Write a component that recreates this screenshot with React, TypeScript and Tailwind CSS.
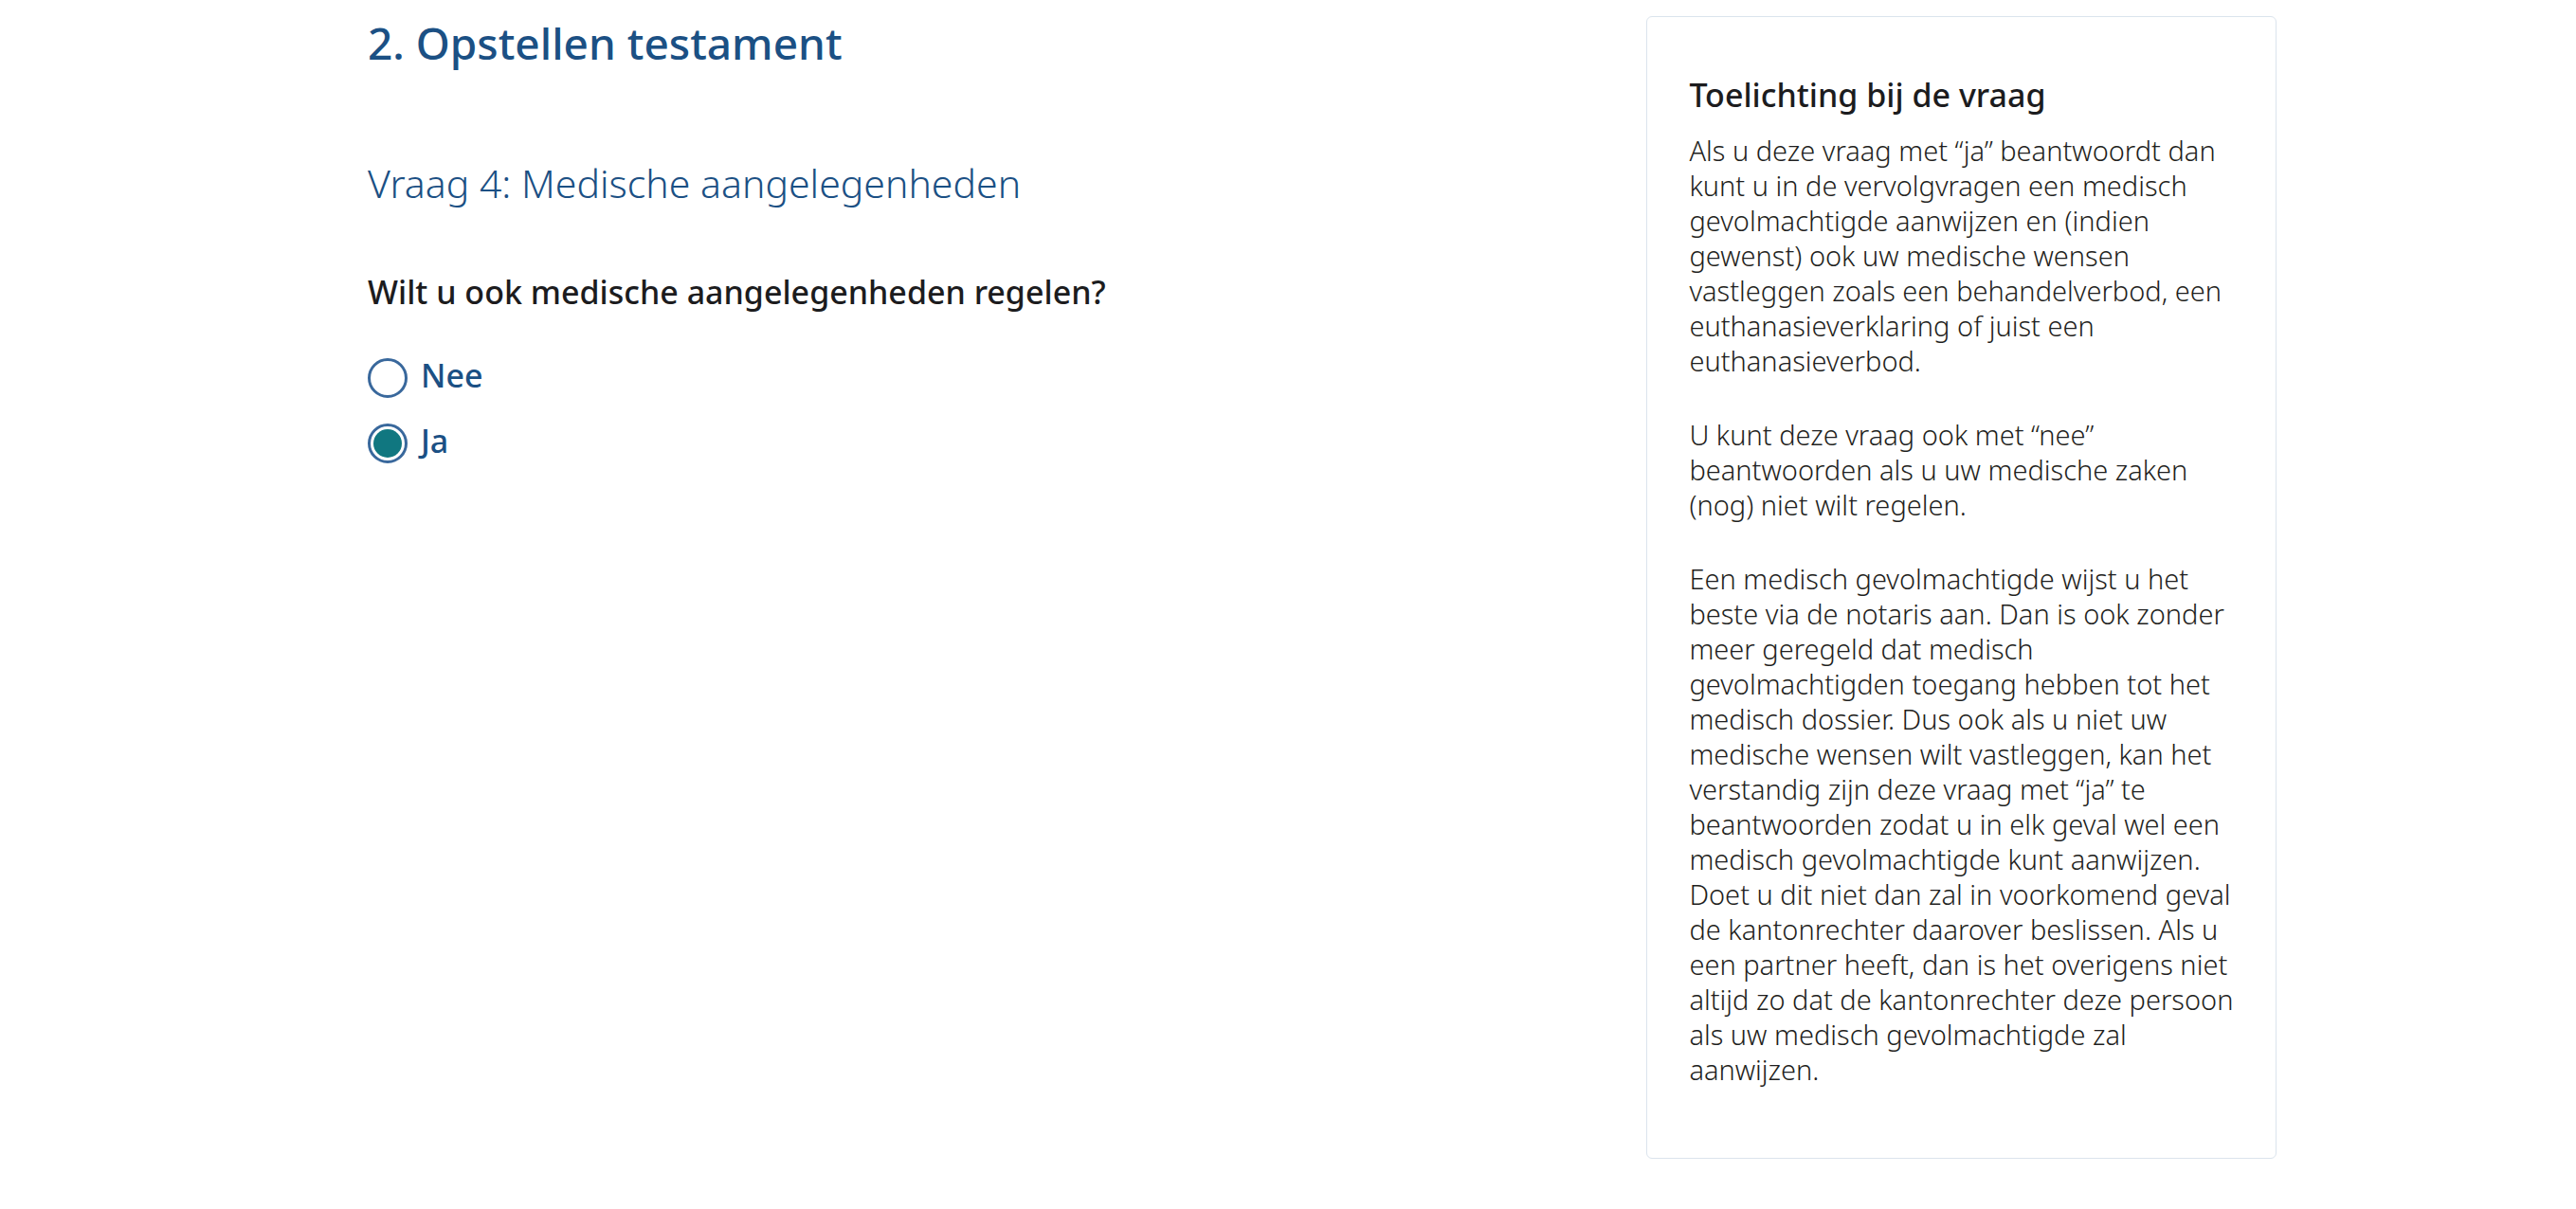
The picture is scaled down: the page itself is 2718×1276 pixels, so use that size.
import { useState } from 'react';

const options = [
  { value: 'nee', label: 'Nee' },
  { value: 'ja', label: 'Ja' },
];

const paragraphs = [
  'Als u deze vraag met “ja” beantwoordt dan kunt u in de vervolgvragen een medisch gevolmachtigde aanwijzen en (indien gewenst) ook uw medische wensen vastleggen zoals een behandelverbod, een euthanasieverklaring of juist een euthanasieverbod.',
  'U kunt deze vraag ook met “nee” beantwoorden als u uw medische zaken (nog) niet wilt regelen.',
  'Een medisch gevolmachtigde wijst u het beste via de notaris aan. Dan is ook zonder meer geregeld dat medisch gevolmachtigden toegang hebben tot het medisch dossier. Dus ook als u niet uw medische wensen wilt vastleggen, kan het verstandig zijn deze vraag met “ja” te beantwoorden zodat u in elk geval wel een medisch gevolmachtigde kunt aanwijzen. Doet u dit niet dan zal in voorkomend geval de kantonrechter daarover beslissen. Als u een partner heeft, dan is het overigens niet altijd zo dat de kantonrechter deze persoon als uw medisch gevolmachtigde zal aanwijzen.',
];

export default function App() {
  const [answer, setAnswer] = useState('ja');

  return (
    <main className="flex items-start justify-between bg-white pt-[17px] pr-[316px] pb-[52px] pl-[388px] font-['Noto_Sans',sans-serif]">
      <section className="w-3/5">
        <h1 className="text-[46px] leading-[56px] font-medium text-[#1b5084]">2. Opstellen testament</h1>
        <h2 className="mt-24 text-[41px] leading-[48px] font-light text-[#1b5084]">
          Vraag 4: Medische aangelegenheden
        </h2>
        <fieldset className="mt-[69px]">
          <legend className="text-[34px] leading-[44px] font-medium text-[#1c1c1e]">
            Wilt u ook medische aangelegenheden regelen?
          </legend>
          <div className="mt-12 flex flex-col gap-[27px]">
            {options.map((option) => (
              <label key={option.value} className="flex cursor-pointer items-start gap-[14px] self-start">
                <input
                  type="radio"
                  name="medisch"
                  value={option.value}
                  checked={answer === option.value}
                  onChange={() => setAnswer(option.value)}
                  className="grid size-[42px] shrink-0 appearance-none place-items-center rounded-full border-3 border-[#39689c] before:size-[30px] before:rounded-full checked:before:bg-[#107780]"
                />
                <span className="text-[34px] leading-[36px] font-medium text-[#1b5084]">{option.label}</span>
              </label>
            ))}
          </div>
        </fieldset>
      </section>
      <aside className="w-[33%] rounded-md border border-[#dbe4ed] px-11 pt-[60px] pb-[75px]">
        <h3 className="text-[34px] leading-[44px] font-medium text-[#1c1c1e]">Toelichting bij de vraag</h3>
        <div className="mt-[18px] flex flex-col gap-[41px] text-[29px] leading-[37px] font-light text-[#1f1f21]">
          {paragraphs.map((text) => (
            <p key={text}>{text}</p>
          ))}
        </div>
      </aside>
    </main>
  );
}
